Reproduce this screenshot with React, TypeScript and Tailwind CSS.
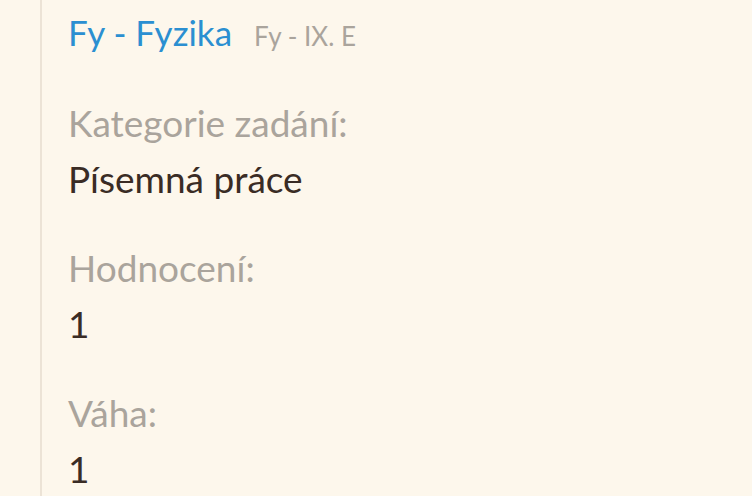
export default function App() {
  const rows = [
    { label: 'Kategorie zadání:', value: 'Písemná práce' },
    { label: 'Hodnocení:', value: '1' },
    { label: 'Váha:', value: '1' },
  ]

  return (
    <div className="h-[496px] w-[752px] overflow-hidden bg-[#fdf7ec] pl-10 font-['Lato','Noto_Sans',sans-serif]">
      <div className="h-full border-l-2 border-[#ece3d6] pl-[26px] pt-[10px]">
        <div className="flex items-baseline gap-[22px]">
          <h1 className="text-[35px] leading-[44px] text-[#2b8fd1]">Fy - Fyzika</h1>
          <span className="text-[26px] text-[#aaa49c]">Fy - IX. E</span>
        </div>

        <div className="mt-[39px] flex flex-col gap-[33px]">
          {rows.map((r) => (
            <div key={r.label}>
              <div className="text-[37px] leading-[56px] text-[#aaa49c]">{r.label}</div>
              <div className="text-[37px] leading-[56px] text-[#3a2c25]">{r.value}</div>
            </div>
          ))}
        </div>
      </div>
    </div>
  )
}
